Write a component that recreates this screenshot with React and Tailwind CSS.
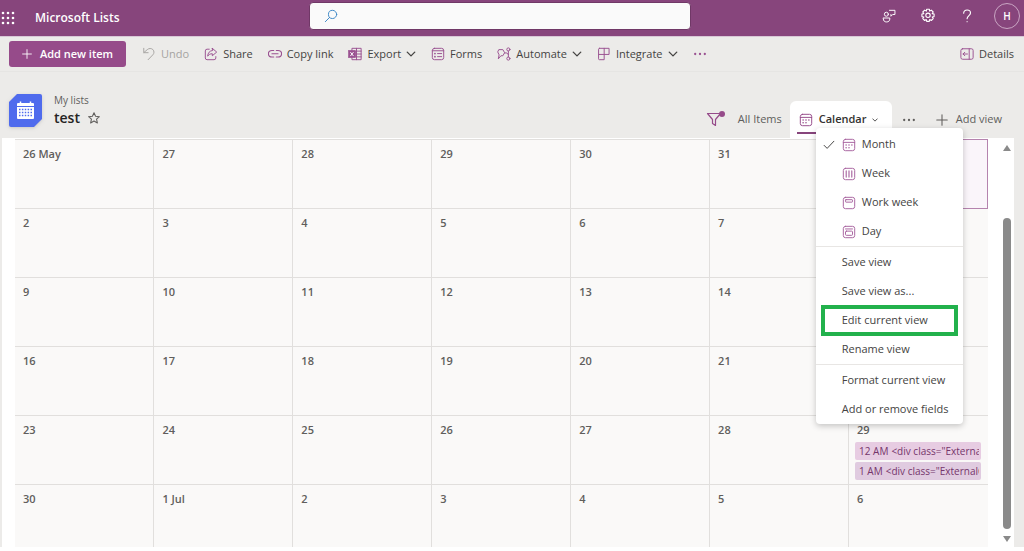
import { useState } from "react";

const weeks = [
  ["26 May", "27", "28", "29", "30", "31", "1 Jun"],
  ["2", "3", "4", "5", "6", "7", "8"],
  ["9", "10", "11", "12", "13", "14", "15"],
  ["16", "17", "18", "19", "20", "21", "22"],
  ["23", "24", "25", "26", "27", "28", "29"],
  ["30", "1 Jul", "2", "3", "4", "5", "6"],
];

const events = [
  { time: "12 AM", title: '<div class="ExternalClass', color: "bg-[#e7cce2]" },
  { time: "1 AM", title: '<div class="ExternalClass', color: "bg-[#e0cbe0]" },
];

function Icon({ className = "size-3.5", children }) {
  return (
    <svg
      viewBox="0 0 16 16"
      className={`shrink-0 ${className}`}
      fill="none"
      stroke="currentColor"
      strokeWidth="1.1"
      strokeLinecap="round"
      strokeLinejoin="round"
      aria-hidden="true"
    >
      {children}
    </svg>
  );
}

const Chevron = ({ className = "size-2.5" }) => (
  <Icon className={className}>
    <path d="M2 5l6 6 6-6" strokeWidth="2.2" />
  </Icon>
);

const Plus = ({ className = "size-3" }) => (
  <Icon className={className}>
    <path d="M8 1v14M1 8h14" strokeWidth="1.4" />
  </Icon>
);

const Dots = () => (
  <Icon>
    <path d="M2.5 8h.01M8 8h.01M13.5 8h.01" strokeWidth="2.6" />
  </Icon>
);

const Frame = () => <rect x="1.5" y="1.5" width="13" height="13" rx="2.5" />;

const MonthIcon = () => (
  <Icon>
    <Frame />
    <path d="M1.5 5h13" />
    <path d="M8 8h.01M11.3 8h.01M4.7 11.2h.01M8 11.2h.01M4.7 8h.01" strokeWidth="1.8" />
  </Icon>
);

const WeekIcon = () => (
  <Icon>
    <Frame />
    <path d="M4.8 4.5v7M8 4.5v7M11.2 4.5v7" strokeWidth="1.3" />
  </Icon>
);

const WorkWeekIcon = () => (
  <Icon>
    <Frame />
    <rect x="4" y="4.2" width="8" height="2.8" rx=".6" />
  </Icon>
);

const DayIcon = () => (
  <Icon>
    <Frame />
    <path d="M4 4.5h8" />
    <rect x="4" y="7" width="8" height="4.8" rx="1" />
  </Icon>
);

const viewModes = [
  { name: "Month", icon: <MonthIcon /> },
  { name: "Week", icon: <WeekIcon /> },
  { name: "Work week", icon: <WorkWeekIcon /> },
  { name: "Day", icon: <DayIcon /> },
];

function ToolbarButton({ icon, label, menu, disabled, className = "mr-[15px]" }) {
  return (
    <button
      disabled={disabled}
      className={`flex items-center gap-[5px] whitespace-nowrap text-[#444342] disabled:text-[#a5a3a1] ${className}`}
    >
      <span className={disabled ? "text-[#a5a3a1]" : "text-[#9a5191]"}>{icon}</span>
      {label}
      {menu && <Chevron />}
    </button>
  );
}

function Header() {
  return (
    <header className="flex h-[37px] shrink-0 items-center border-b border-[#d8c8d6] bg-[#87457c] text-white">
      <div className="flex w-[309px] items-center gap-5">
        <button aria-label="App launcher" className="ml-px">
          <svg viewBox="0 0 14 14" className="size-3.5" fill="currentColor">
            {[2, 7, 12].map((y) =>
              [2, 7, 12].map((x) => <circle key={`${x}-${y}`} cx={x} cy={y} r="1.3" />)
            )}
          </svg>
        </button>
        <span className="text-xs font-semibold">Microsoft Lists</span>
      </div>
      <label className="mb-1 flex h-7 min-w-0 flex-[0_1_382px] items-center rounded border border-[#703867] bg-[#fafafa] px-3.5 text-[#3c86c6]">
        <Icon>
          <circle cx="9.8" cy="6.2" r="4.7" />
          <path d="M6.5 9.5L1.5 14.5" />
        </Icon>
        <input
          type="search"
          aria-label="Search"
          className="ml-2 min-w-0 flex-1 bg-transparent text-xs text-[#323130] outline-none"
        />
      </label>
      <div className="ml-auto flex items-center gap-6 pr-1 pb-1">
        <button aria-label="Feedback">
          <Icon>
            <circle cx="5" cy="6" r="2.3" />
            <path d="M1.5 10.3h7.4v1.2c0 2-1.4 3.3-3.7 3.3s-3.7-1.3-3.7-3.3z" />
            <path d="M8.5 1.5h6.3v4.800h-2.600l-2 2V6.300" />
          </Icon>
        </button>
        <button aria-label="Settings">
          <Icon className="size-4">
            <path d="M6.700 1.200h2.600l.4 1.900 1.600-1 1.900 1.900-1 1.600 1.900.4v2.600l-1.900.4 1 1.600-1.900 1.900-1.600-1-.4 1.900H6.700l-.4-1.900-1.600 1-1.900-1.900 1-1.600-1.900-.4V6l1.900-.4-1-1.600 1.900-1.900 1.600 1z" />
            <circle cx="8" cy="7.300" r="2.200" />
          </Icon>
        </button>
        <button aria-label="Help">
          <Icon>
            <path d="M4.200 4.800c0-2.200 1.600-3.600 3.900-3.600S12 2.600 12 4.600c0 2.800-3.900 3.200-3.900 6.600M8.100 14.500h.01" strokeWidth="1.300" />
          </Icon>
        </button>
        <button
          aria-label="Account"
          className="-ml-1 flex size-[26px] items-center justify-center rounded-full border border-[#c9a5c3] text-[10px] font-semibold"
        >
          H
        </button>
      </div>
    </header>
  );
}

function Toolbar() {
  return (
    <div className="flex h-[35px] shrink-0 items-center border-b border-[#e6e5e3] pr-2.5 pl-[9px] text-[11px]">
      <button className="mr-4 flex h-[26px] w-[117px] shrink-0 items-center justify-center gap-2 rounded-[3px] bg-[#964b8a] font-semibold whitespace-nowrap text-white">
        <Plus className="size-2.5" />
        Add new item
      </button>
      <ToolbarButton
        disabled
        label="Undo"
        icon={
          <Icon>
            <path d="M2 1.500v5h5M2.200 6.300L6 3c2-1.700 4.700-1.700 6.400-.1 1.700 1.700 1.700 4.300 0 6L7 14.500" />
          </Icon>
        }
      />
      <ToolbarButton
        label="Share"
        icon={
          <Icon>
            <path d="M6 2.500H3.500a2 2 0 00-2 2v8a2 2 0 002 2h8a2 2 0 002-2V11" />
            <path d="M9.500 1.500l5 4.300-5 4.200V7.700C7 7.700 5.500 8.600 4.200 10.500c.3-3.800 2.200-6.200 5.300-6.500z" />
          </Icon>
        }
      />
      <ToolbarButton
        label="Copy link"
        icon={
          <Icon>
            <path d="M6.500 4H4.500a4 3.700 0 000 7.400h2M9.500 4h2a4 3.700 0 010 7.400h-2M4.500 7.700h7" strokeWidth="1.300" />
          </Icon>
        }
      />
      <ToolbarButton
        menu
        label="Export"
        icon={
          <Icon>
            <path d="M4.500 4V1.500h10.500v13H4.500V12M9.700 1.500v13M9 4.700h6M9 8h6M9 11.300h6" />
            <rect x=".6" y="4.200" width="7.800" height="7.600" fill="currentColor" />
            <path d="M3 6.200l3 3.800M6 6.200L3 10" stroke="#fff" />
          </Icon>
        }
      />
      <ToolbarButton
        label="Forms"
        icon={
          <Icon>
            <Frame />
            <path d="M1.500 4.300h13M7.500 7.500h4.700M7.500 11h4.700" />
            <path d="M4.500 7.500h.01M4.500 11h.01" strokeWidth="2" />
          </Icon>
        }
      />
      <ToolbarButton
        menu
        label="Automate"
        icon={
          <Icon>
            <path d="M2.500 3h4.200l2 3.500-2 3.500H4.500l-3 3.500.9-4.500L1 6z" />
            <circle cx="13" cy="2.800" r="1.800" />
            <circle cx="13" cy="13.200" r="1.800" />
            <path d="M13 4.600v6.800M8.700 6.800h2.500l1.800 2" />
          </Icon>
        }
      />
      <ToolbarButton
        menu
        label="Integrate"
        icon={
          <Icon>
            <path d="M2.800 1.500h11v7h-12v-6a1 1 0 011-1zM1.800 8.500v5a1 1 0 001 1h5.400v-13" />
          </Icon>
        }
      />
      <button aria-label="More commands" className="text-[#9a5191]">
        <Dots />
      </button>
      <ToolbarButton
        className="ml-auto"
        label="Details"
        icon={
          <Icon>
            <rect x="1" y="2" width="14" height="12" rx="2" />
            <path d="M10.500 2v12M8.500 8h-5M5.500 6l-2 2 2 2" />
          </Icon>
        }
      />
    </div>
  );
}

function ViewMenu({ mode, setMode }) {
  return (
    <div
      role="menu"
      className="absolute top-[27px] left-[26px] z-10 w-[147px] rounded-sm bg-white pt-0.5 text-[11px] text-[#444342] shadow-[0_2px_6px_rgba(0,0,0,0.22)]"
    >
      {viewModes.map((v) => (
        <button
          key={v.name}
          role="menuitemradio"
          aria-checked={mode === v.name}
          onClick={() => setMode(v.name)}
          className="flex h-[29px] w-full items-center pl-[7px] hover:bg-gray-100"
        >
          <span className="w-[19px]">
            {mode === v.name && (
              <Icon className="size-3">
                <path d="M1.500 8.500l4 4 9-9.500" strokeWidth="1.300" />
              </Icon>
            )}
          </span>
          <span className="mr-1.5 text-[#a8639f]">{v.icon}</span>
          {v.name}
        </button>
      ))}
      <hr className="mb-px border-[#e8e6e4]" />
      {["Save view", "Save view as...", "Edit current view", "Rename view"].map((item) => (
        <button
          key={item}
          role="menuitem"
          className="relative flex h-[29px] w-full items-center pl-[26px] hover:bg-gray-100"
        >
          {item}
          {item === "Edit current view" && (
            <span className="absolute inset-x-[5px] -inset-y-px border-4 border-[#22b14c]" />
          )}
        </button>
      ))}
      <hr className="mb-px border-[#e8e6e4]" />
      {["Format current view", "Add or remove fields"].map((item) => (
        <button
          key={item}
          role="menuitem"
          className="flex h-[29px] w-full items-center pl-[26px] hover:bg-gray-100"
        >
          {item}
        </button>
      ))}
    </div>
  );
}

function ListHeader({ mode, setMode }) {
  return (
    <div className="flex h-[66px] shrink-0 items-end justify-between pl-[9px] text-[#605e5c]">
      <div className="mb-2.5 flex items-center gap-3">
        <svg viewBox="0 0 33 33" className="size-[33px] drop-shadow" aria-hidden="true">
          <path d="M8 0h23a2 2 0 012 2v23l-8 8H2a2 2 0 01-2-2V8z" fill="#4f6bed" />
          <path d="M9 9h15a1 1 0 011 1v14a1 1 0 01-1 1H9a1 1 0 01-1-1V10a1 1 0 011-1z" fill="#fff" />
          <path d="M8 12.500h17" stroke="#4f6bed" />
          <path d="M11.500 7.500v3M21.500 7.500v3" stroke="#fff" strokeWidth="1.500" />
          <path
            d="M10 15.500h13M10 18.500h13M10 21.500h13"
            stroke="#4f6bed"
            strokeWidth="1.500"
            strokeDasharray="1.500 1.375"
          />
        </svg>
        <div>
          <p className="text-[10px] leading-4">My lists</p>
          <div className="flex items-center gap-2">
            <h1 className="text-sm leading-5 font-semibold text-[#252423]">test</h1>
            <button aria-label="Add to favorites">
              <Icon className="size-3">
                <path d="M8 1l2.100 4.700 5.100.5-3.800 3.400 1.100 5L8 12l-4.500 2.600 1.100-5L.8 6.200l5.100-.5z" strokeWidth="1.400" />
              </Icon>
            </button>
          </div>
        </div>
      </div>
      <div className="flex h-[37px] pr-[22px] text-[11px]">
        <button aria-label="Filter" className="mr-3 text-[#964b8a]">
          <svg viewBox="0 0 20 18" className="h-[18px] w-5" fill="none" stroke="currentColor">
            <path d="M1.500 2.500h13l-5 6v6l-3-2v-4z" strokeWidth="1.200" strokeLinejoin="round" />
            <circle cx="16" cy="3" r="3" fill="currentColor" stroke="none" />
          </svg>
        </button>
        <button className="mr-2">All Items</button>
        <div className="relative mr-2.5 w-[102px]">
          <button className="flex h-full w-full items-center gap-1.5 rounded-t-md bg-white pl-[9px] font-semibold text-[#323130]">
            <span className="text-[#964b8a]">
              <MonthIcon />
            </span>
            Calendar
            <Chevron className="size-1.5" />
          </button>
          <span className="absolute bottom-1 left-[7px] h-0.5 w-[88px] bg-[#87457c]" />
          <ViewMenu mode={mode} setMode={setMode} />
        </div>
        <button aria-label="More views" className="mr-5">
          <Dots />
        </button>
        <button className="flex items-center gap-2">
          <Plus />
          Add view
        </button>
      </div>
    </div>
  );
}

function Calendar() {
  return (
    <table className="w-full table-fixed border-collapse bg-[#faf9f8] text-[11px] font-semibold text-[#605e5c]">
      <tbody>
        {weeks.map((days, w) => (
          <tr key={w} className="h-[69px]">
            {days.map((day) => (
              <td
                key={day}
                className={
                  day === "1 Jun"
                    ? "border border-[#b583ae] bg-[#faf5fa] px-2 pt-1.5 align-top"
                    : "border-t border-l border-[#e1dfdd] px-2 pt-1.5 align-top first:border-l-0"
                }
              >
                <span className="block leading-4">{day}</span>
                {w === 4 && day === "29" && (
                  <div className="mt-1 -mr-px -ml-0.5 space-y-0.5">
                    {events.map((e) => (
                      <a
                        key={e.time}
                        href="#"
                        className={`block h-[18px] rounded-xs pr-0.5 pl-1 text-[10px] leading-[18px] font-medium text-[#75356b] ${e.color}`}
                      >
                        <span className="block overflow-hidden whitespace-nowrap">
                          <span className="mr-[3px] font-normal">{e.time}</span>
                          {e.title}
                        </span>
                      </a>
                    ))}
                  </div>
                )}
              </td>
            ))}
          </tr>
        ))}
      </tbody>
    </table>
  );
}

function App() {
  const [mode, setMode] = useState("Month");

  return (
    <div className="flex h-screen flex-col overflow-hidden bg-white font-['Open_Sans','Noto_Sans',sans-serif]">
      <div className="mb-1 flex min-h-0 flex-1 flex-col bg-[#ecebe9]">
        <Header />
        <Toolbar />
        <ListHeader mode={mode} setMode={setMode} />
        <main className="mr-2.5 ml-0.5 flex min-h-0 flex-1 items-start overflow-hidden bg-white pt-px pl-[13px]">
          <div className="min-w-0 flex-1">
            <Calendar />
          </div>
          {/* scroll track */}
          <div className="flex h-full w-[26px] shrink-0 flex-col items-end pt-[5px] pr-0.5 pb-1 text-[#8a8a8a]">
            <svg viewBox="0 0 10 8" className="h-2 w-2.5" fill="currentColor">
              <path d="M5 1l4 6H1z" />
            </svg>
            <div className="mt-[66px] mr-px w-2 flex-1 rounded-full bg-current" />
            <svg viewBox="0 0 10 8" className="mt-1.5 h-2 w-2.5" fill="currentColor">
              <path d="M5 7l4-6H1z" />
            </svg>
          </div>
        </main>
      </div>
    </div>
  );
}

export default App;
